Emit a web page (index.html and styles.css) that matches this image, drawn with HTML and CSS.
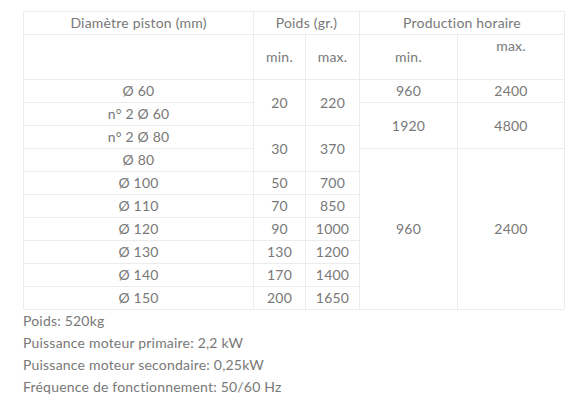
FILE: index.html
```html
<!DOCTYPE html>
<html lang="fr">
<head>
<meta charset="utf-8">
<link rel="stylesheet" href="styles.css">
</head>
<body>
<div class="wrap">
<table class="spec">
<colgroup>
<col class="c1"><col class="c2"><col class="c3"><col class="c4"><col class="c5">
</colgroup>
<tr><td>Diamètre piston (mm)</td><td colspan="2">Poids (gr.)</td><td colspan="2">Production horaire</td></tr>
<tr class="sub"><td></td><td>min.</td><td>max.</td><td>min.</td><td class="top">max.</td></tr>
<tr><td>Ø 60</td><td rowspan="2">20</td><td rowspan="2">220</td><td>960</td><td>2400</td></tr>
<tr><td>n° 2 Ø 60</td><td rowspan="2">1920</td><td rowspan="2">4800</td></tr>
<tr><td>n° 2 Ø 80</td><td rowspan="2">30</td><td rowspan="2">370</td></tr>
<tr><td>Ø 80</td><td rowspan="7">960</td><td rowspan="7">2400</td></tr>
<tr><td>Ø 100</td><td>50</td><td>700</td></tr>
<tr><td>Ø 110</td><td>70</td><td>850</td></tr>
<tr><td>Ø 120</td><td>90</td><td>1000</td></tr>
<tr><td>Ø 130</td><td>130</td><td>1200</td></tr>
<tr><td>Ø 140</td><td>170</td><td>1400</td></tr>
<tr><td>Ø 150</td><td>200</td><td>1650</td></tr>
</table>
<p class="line">Poids: 520kg</p>
<p class="line">Puissance moteur primaire: 2,2 kW</p>
<p class="line">Puissance moteur secondaire: 0,25kW</p>
<p class="line">Fréquence de fonctionnement: 50/60 Hz</p>
</div>
</body>
</html>
```
FILE: styles.css
```css
html, body { margin: 0; padding: 0; background: #fff; }
body { font-family: "Lato", "Open Sans", sans-serif; font-size: 14px; letter-spacing: 0.2px; color: #787878; }
.wrap { padding: 11px 20px 0 23px; }
.spec { border-collapse: collapse; table-layout: fixed; width: 541px; }
.c1 { width: 230px; } .c2 { width: 52px; } .c3 { width: 54px; } .c4 { width: 98px; } .c5 { width: 107px; }
.spec td { border: 1px solid #ececec; padding: 0; height: 22px; line-height: 22px; text-align: center; vertical-align: middle; }
.spec tr.sub td { height: 44px; }
.spec td.top { vertical-align: top; }
.line { margin: 0; line-height: 22px; }
```
